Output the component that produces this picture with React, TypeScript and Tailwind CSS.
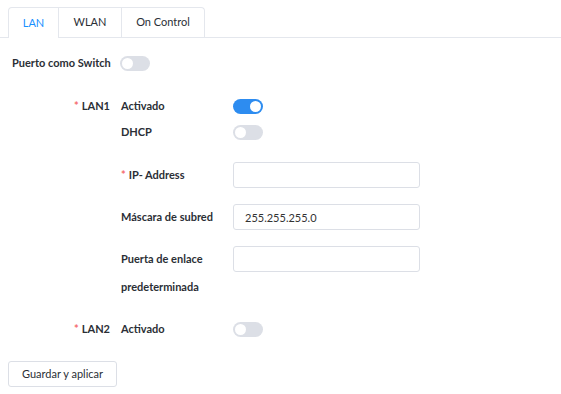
import React from "react";

const Toggle: React.FC<{ on?: boolean }> = ({ on }) => (
  <span
    className={
      on
        ? "relative inline-block h-[15px] w-[30px] rounded-full bg-[#2d8cf0]"
        : "relative inline-block h-[15px] w-[30px] rounded-full bg-[#dcdfe6]"
    }
  >
    <span
      className={
        on
          ? "absolute left-[17px] top-[2px] h-[11px] w-[11px] rounded-full bg-white"
          : "absolute left-[2px] top-[2px] h-[11px] w-[11px] rounded-full bg-white"
      }
    />
  </span>
);

const Req = () => <span className="mr-[3px] text-[#f56c6c]">*</span>;

const Field: React.FC<{ value?: string }> = ({ value }) => (
  <input
    readOnly
    value={value ?? ""}
    className="h-[26px] w-[187px] rounded-[3px] border border-[#dcdfe6] bg-white px-[11px] text-[11px] font-normal text-[#333] outline-none"
  />
);

const App: React.FC = () => {
  const tabs = [
    { name: "LAN", w: "w-[51px]" },
    { name: "WLAN", w: "w-[63px]" },
    { name: "On Control", w: "w-[83px]" },
  ];

  return (
    <div className="h-[394px] w-[561px] bg-white font-['Lato','Open_Sans',sans-serif] text-[11px] text-[#2b2f36]">
      <div className="flex h-[38px] items-end border-b border-[#e4e7ed] pl-[8px]">
        {tabs.map((t, i) => (
          <div
            key={t.name}
            className={
              i === 0
                ? `${t.w} -mb-px flex h-[31px] items-center justify-center rounded-tl-[4px] border border-b-0 border-[#e4e7ed] bg-white text-[#1890ff]`
                : i === tabs.length - 1
                  ? `${t.w} flex h-[30px] items-center justify-center rounded-tr-[4px] border-r border-t border-[#e4e7ed] text-[#2b2f36]`
                  : `${t.w} flex h-[30px] items-center justify-center border-r border-t border-[#e4e7ed] text-[#2b2f36]`
            }
          >
            {t.name}
          </div>
        ))}
      </div>

      <div className="font-bold">
        <div className="mt-[15px] flex h-[20px] items-center">
          <div className="w-[120px] pl-[12px]">Puerto como Switch</div>
          <Toggle />
        </div>

        <div className="mt-[23px] flex h-[20px] items-center">
          <div className="w-[110px] text-right">
            <Req />
            LAN1
          </div>
          <div className="ml-[11px] w-[112px]">Activado</div>
          <Toggle on />
        </div>

        <div className="mt-[6px] flex h-[20px] items-center">
          <div className="ml-[121px] w-[112px]">DHCP</div>
          <Toggle />
        </div>

        <div className="mt-[20px] flex items-center">
          <div className="ml-[121px] w-[112px]">
            <Req />
            IP- Address
          </div>
          <Field />
        </div>

        <div className="mt-[16px] flex items-center">
          <div className="ml-[121px] w-[112px]">Máscara de subred</div>
          <Field value="255.255.255.0" />
        </div>

        <div className="mt-[15px] flex items-start">
          <div className="ml-[121px] w-[112px] leading-[28px]">
            Puerta de enlace
            <br />
            predeterminada
          </div>
          <div className="pt-[1px]">
            <Field />
          </div>
        </div>

        <div className="mt-[18px] flex h-[20px] items-center">
          <div className="w-[110px] text-right">
            <Req />
            LAN2
          </div>
          <div className="ml-[11px] w-[112px]">Activado</div>
          <Toggle />
        </div>
      </div>

      <div className="mt-[22px] pl-[8px]">
        <button className="h-[26px] w-[109px] rounded-[3px] border border-[#dcdfe6] bg-white text-[11px] text-[#2b2f36]">
          Guardar y aplicar
        </button>
      </div>
    </div>
  );
};

export default App;
